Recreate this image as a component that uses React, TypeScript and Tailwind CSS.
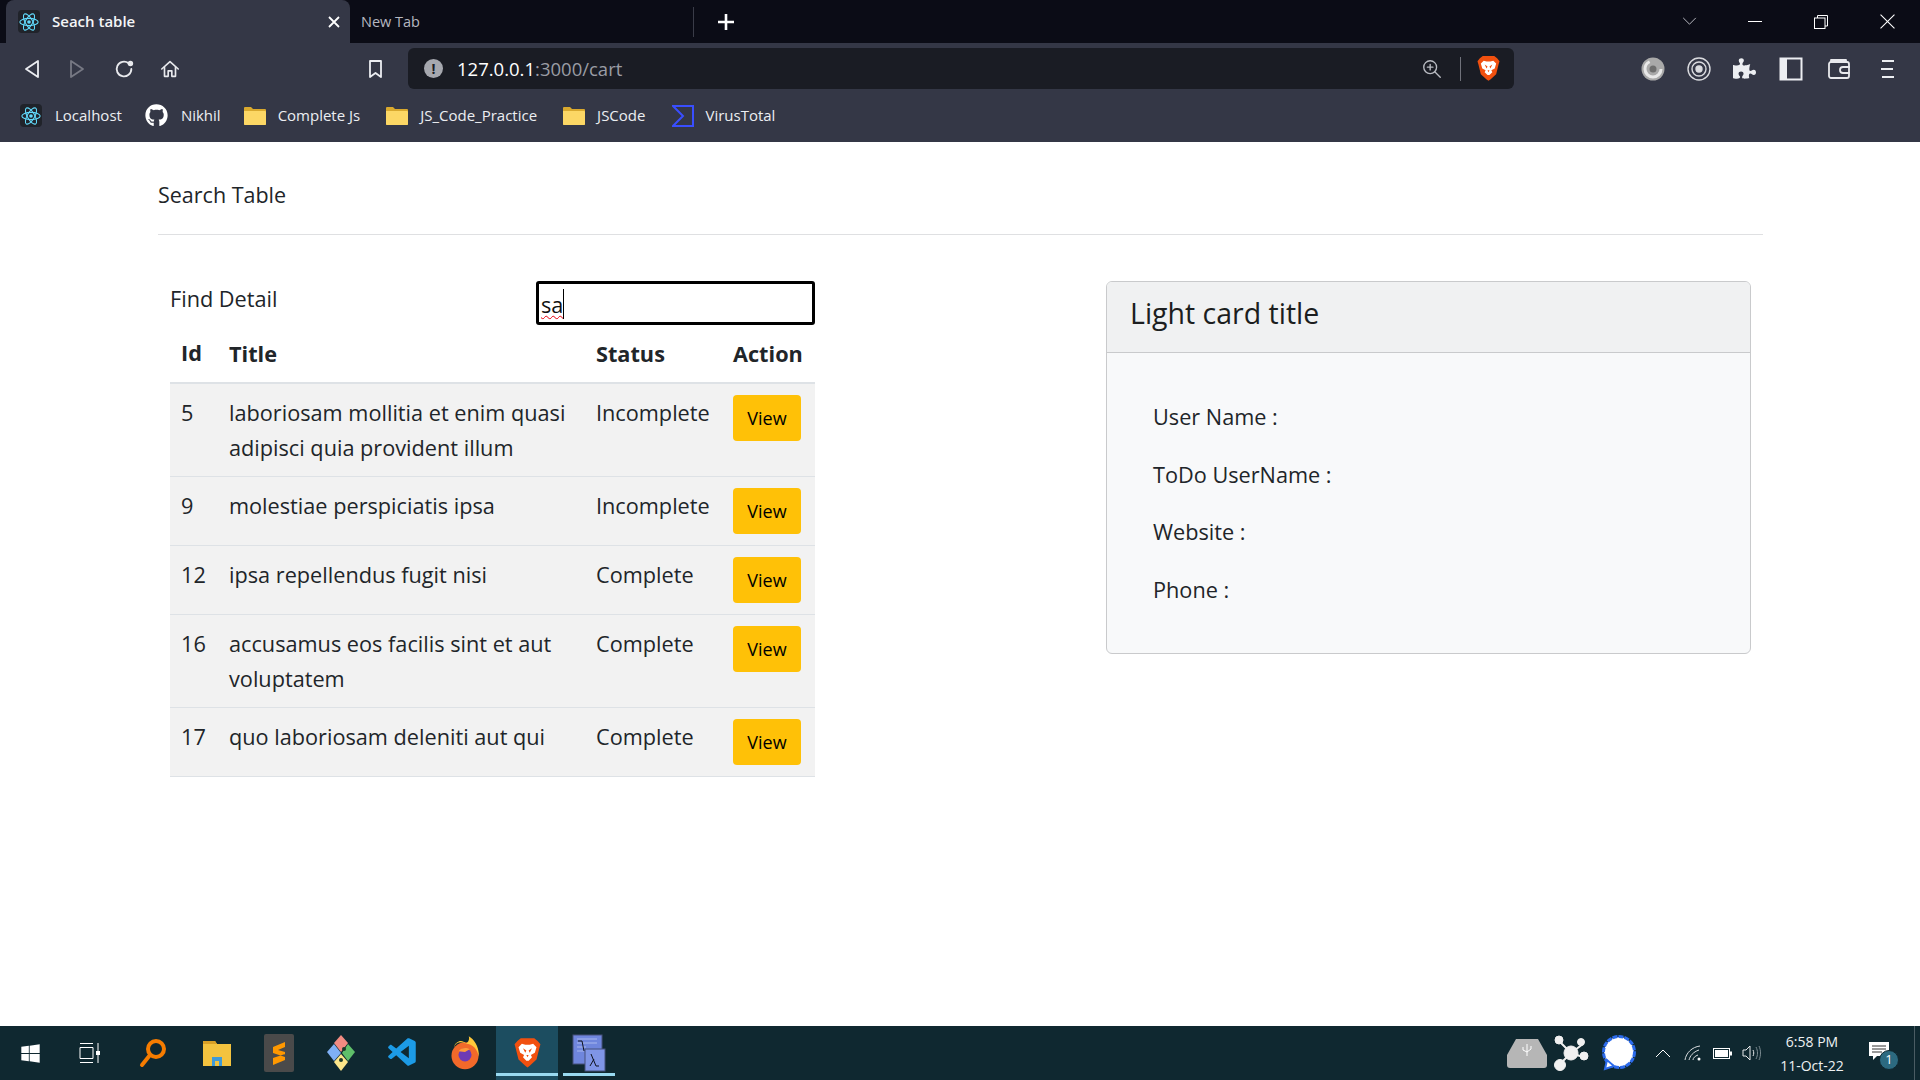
import React from 'react'
import { FaGithub, FaWindows, FaPuzzlePiece } from 'react-icons/fa'
import { VscVscode } from 'react-icons/vsc'

const rows = [
  { id: 5, title: 'laboriosam mollitia et enim quasi adipisci quia provident illum', status: 'Incomplete' },
  { id: 9, title: 'molestiae perspiciatis ipsa', status: 'Incomplete' },
  { id: 12, title: 'ipsa repellendus fugit nisi', status: 'Complete' },
  { id: 16, title: 'accusamus eos facilis sint et aut voluptatem', status: 'Complete' },
  { id: 17, title: 'quo laboriosam deleniti aut qui', status: 'Complete' },
]

const ReactLogo = ({ size = 22 }: { size?: number }) => (
  <div className="bg-[#20232a] rounded-sm flex items-center justify-center" style={{ width: size, height: size + 1 }}>
    <svg viewBox="-12 -12 24 24" width={size} height={size} fill="none" stroke="#61dafb" strokeWidth="1.2">
      <circle r="2" fill="#61dafb" stroke="none" />
      <ellipse rx="10" ry="4" />
      <ellipse rx="10" ry="4" transform="rotate(60)" />
      <ellipse rx="10" ry="4" transform="rotate(120)" />
    </svg>
  </div>
)

const Folder = () => (
  <svg viewBox="0 0 22 20" width="22" height="20">
    <path d="M0 2a1 1 0 0 1 1-1h6l2 2h12a1 1 0 0 1 1 1v14a1 1 0 0 1-1 1H1a1 1 0 0 1-1-1z" fill="#d9a92e" />
    <path d="M0 5h21a1 1 0 0 1 1 1v12a1 1 0 0 1-1 1H1a1 1 0 0 1-1-1z" fill="#fcd765" />
  </svg>
)

// lion head on an orange shield
const BraveLogo = ({ size }: { size: number }) => (
  <svg viewBox="0 0 24 28" width={size} height={size * 28 / 24}>
    <path d="M6 1h12l3 2.5 2.5 3-1 3.5-2.5 10-6 5.5-2 1.5-2-1.5-6-5.5-2.5-10-1-3.5 2.5-3z" fill="#f1500f" />
    <path d="M7 6l3 .8h4L17 6l3 3-1.5 5-3.5 2 1 2-3 3h-2l-3-3 1-2-3.5-2L4 9z" fill="#fff" />
    <path d="M8 10l3 2-1 2zM16 10l-3 2 1 2zM11 16h2l-1 2z" fill="#f1500f" />
  </svg>
)

const Bookmark = ({ icon, label, iconClass, gap }: { icon: React.ReactNode; label: string; iconClass: string; gap: string }) => (
  <div className={`flex items-center ${gap}`}>
    <div className={`flex justify-center ${iconClass}`}>{icon}</div>
    <span className="text-[15px] text-[#eceef2] whitespace-nowrap">{label}</span>
  </div>
)

const Stroke = ({ children, size = 24, color = '#e8e9ed', width = 1.8 }: { children: React.ReactNode; size?: number; color?: string; width?: number }) => (
  <svg viewBox="0 0 24 24" width={size} height={size} fill="none" stroke={color} strokeWidth={width} strokeLinecap="round" strokeLinejoin="round">
    {children}
  </svg>
)

const TabStrip = () => (
  <div className="h-[43px] bg-[#0b0c16] flex items-center pl-[6px]">
    <div className="w-[344px] h-[43px] bg-[#343746] rounded-t-[8px] flex items-center pl-[12px] pr-[10px]">
      <ReactLogo />
      <span className="ml-[12px] text-[15px] font-semibold text-[#f4f5f7] flex-1">Seach table</span>
      <svg viewBox="0 0 12 12" width="12" height="12" stroke="#ffffff" strokeWidth="1.8"><path d="M1 1l10 10M11 1L1 11" /></svg>
    </div>
    <div className="w-[344px] h-[30px] flex items-center pl-[11px] text-[14.5px] text-[#b6b8c0] border-r border-[#3a3c48]">New Tab</div>
    <div className="w-[64px] h-[43px] flex items-center justify-center">
      <svg viewBox="0 0 18 18" width="18" height="18" stroke="#ffffff" strokeWidth="2.6"><path d="M9 1v16M1 9h16" /></svg>
    </div>
    <div className="flex-1" />
    <div className="h-[43px] flex items-center text-white">
      <div className="w-[66px] flex justify-center">
        <svg viewBox="0 0 16 10" width="15" height="9" fill="none" stroke="#c8c9d0"><path d="M1 1l7 7 7-7" /></svg>
      </div>
      <div className="w-[66px] flex justify-center"><div className="w-[14px] h-px bg-white" /></div>
      <div className="w-[66px] flex justify-center">
        <svg viewBox="0 0 14 14" width="14" height="14" fill="none" stroke="#fff"><path d="M3.5 3V.5h10V11H11" /><rect x=".5" y="3" width="10.5" height="10.5" /></svg>
      </div>
      <div className="w-[66px] flex justify-center">
        <svg viewBox="0 0 14 14" width="15" height="15" fill="none" stroke="#fff"><path d="M.5.5l13 13M13.5.5l-13 13" /></svg>
      </div>
    </div>
  </div>
)

const Toolbar = () => (
  <div className="h-[51px] bg-[#343746] flex items-center">
    <div className="w-[64px] flex justify-center">
      <svg viewBox="0 0 16 20" width="16" height="20" fill="none" stroke="#eceef2" strokeWidth="1.8" strokeLinejoin="round"><path d="M14 2v16L2 10z" /></svg>
    </div>
    <div className="w-[26px] flex justify-center">
      <svg viewBox="0 0 16 20" width="16" height="20" fill="none" stroke="#777984" strokeWidth="1.8" strokeLinejoin="round"><path d="M2 2v16l12-8z" /></svg>
    </div>
    <div className="w-[68px] flex justify-center">
      <Stroke size={22} width={2}><path d="M20 12a8 8 0 1 1-3-6.2" /><circle cx="19" cy="6" r="2" fill="#e8e9ed" /></Stroke>
    </div>
    <div className="w-[24px] flex justify-center">
      <Stroke size={22}><path d="M3 12l9-8 9 8" /><path d="M6 10v10h4v-6h4v6h4V10" /></Stroke>
    </div>
    <div className="w-[226px] flex justify-end pr-[25px]">
      <svg viewBox="0 0 14 20" width="15" height="20" fill="none" stroke="#eceef2" strokeWidth="1.8" strokeLinejoin="round"><path d="M1.5 2h11v16L7 14l-5.5 4z" /></svg>
    </div>
    <div className="w-[1106px] h-[41px] bg-[#1a1c24] rounded-[6px] flex items-center pl-[16px] pr-[14px]">
      <div className="w-[19px] h-[19px] rounded-full bg-[#a6a8af] flex items-center justify-center text-[#1a1c24] text-[14px] font-bold leading-none">!</div>
      <div className="ml-[14px] text-[18.5px] flex-1"><span className="text-white">127.0.0.1</span><span className="text-[#9a9ca5]">:3000/cart</span></div>
      <Stroke size={22} color="#b9bbc2" width={1.5}><circle cx="10" cy="10" r="7" /><path d="M15 15l6 6M10 7v6M7 10h6" /></Stroke>
      <div className="w-px h-[24px] bg-[#70727b] ml-[17px] mr-[16px]" />
      <BraveLogo size={23} />
    </div>
    <div className="flex-1 flex items-center pl-[127px]">
      <div className="w-[46px]">
        <svg viewBox="0 0 24 24" width="24" height="24"><circle cx="12" cy="12" r="11.5" fill="#a9a9a9" /><circle cx="12" cy="12" r="8" fill="none" stroke="#e8e8e8" strokeWidth="3" strokeDasharray="34 16" /><circle cx="12" cy="12" r="3.5" fill="#6e6e6e" /></svg>
      </div>
      <div className="w-[46px]">
        <svg viewBox="0 0 24 24" width="24" height="24" fill="none" stroke="#d9dade" strokeWidth="1.4"><circle cx="12" cy="12" r="11" /><circle cx="12" cy="12" r="7" /><circle cx="12" cy="12" r="3" fill="#d9dade" /></svg>
      </div>
      <div className="w-[46px]"><FaPuzzlePiece size={23} color="#eceef2" /></div>
      <div className="w-[48px]">
        <svg viewBox="0 0 24 24" width="24" height="24"><rect x="1.5" y="1.5" width="21" height="21" fill="none" stroke="#eceef2" strokeWidth="2" /><rect x="1" y="1" width="7" height="22" fill="#eceef2" /></svg>
      </div>
      <div className="w-[54px]">
        <Stroke size={24} width={1.8}><rect x="2" y="5" width="20" height="16" rx="2" /><path d="M4 5V3h15v2M22 10h-6a2.5 2.5 0 0 0 0 6h6" /></Stroke>
      </div>
      <div className="flex flex-col gap-[6px]">
        <div className="w-[12px] h-[2px] bg-[#eceef2] ml-[1px]" />
        <div className="w-[12px] h-[2px] bg-[#eceef2]" />
        <div className="w-[12px] h-[2px] bg-[#eceef2] ml-[1px]" />
      </div>
    </div>
  </div>
)

const Bookmarks = () => (
  <div className="h-[48px] bg-[#343746] flex items-center pl-[20px] pb-[5px]">
    <Bookmark icon={<ReactLogo />} label="Localhost" iconClass="w-[22px]" gap="gap-[13px]" />
    <div className="w-[23px]" />
    <Bookmark icon={<FaGithub size={23} color="#fff" />} label="Nikhil" iconClass="w-[24px]" gap="gap-[12px]" />
    <div className="w-[23px]" />
    <Bookmark icon={<Folder />} label="Complete Js" iconClass="w-[22px]" gap="gap-[12px]" />
    <div className="w-[26px]" />
    <Bookmark icon={<Folder />} label="JS_Code_Practice" iconClass="w-[22px]" gap="gap-[12px]" />
    <div className="w-[26px]" />
    <Bookmark icon={<Folder />} label="JSCode" iconClass="w-[22px]" gap="gap-[12px]" />
    <div className="w-[27px]" />
    <Bookmark
      icon={<svg viewBox="0 0 22 24" width="22" height="24" fill="none" stroke="#394eff" strokeWidth="2"><path d="M1 2h20v20H1l10-10z" /></svg>}
      label="VirusTotal"
      iconClass="w-[22px]"
      gap="gap-[11px]"
    />
  </div>
)

const SearchTable = () => (
  <div className="w-[645px]">
    <div className="flex items-start h-[49px]">
      <div className="w-[366px] text-[#212529] leading-[36px]">Find Detail</div>
      <div className="w-[279px] h-[44px] border-[3px] border-black rounded-[3px] flex items-center pl-[2px] bg-white pt-[2px]">
        <span className="text-[#111] underline decoration-wavy decoration-red-600 decoration-1 underline-offset-2">sa</span>
        <div className="w-px h-[30px] bg-black" />
      </div>
    </div>
    <table className="w-[645px] table-fixed border-collapse text-[#212529]">
      <thead>
        <tr className="border-b-2 border-[#dee2e6]">
          <th className="w-[47px] text-left font-bold px-[11px] pt-[3px] pb-[9px] leading-[40px]">Id</th>
          <th className="w-[367px] text-left font-bold px-[12px] pt-[3px] pb-[9px]">Title</th>
          <th className="w-[137px] text-left font-bold px-[12px] pt-[3px] pb-[9px]">Status</th>
          <th className="text-left font-bold px-[12px] pt-[3px] pb-[9px] whitespace-nowrap">Action</th>
        </tr>
      </thead>
      <tbody>
        {rows.map(r => (
          <tr key={r.id} className="bg-[#f2f2f2] border-b border-[#dee2e6] align-top">
            <td className="px-[11px] py-[11px]">{r.id}</td>
            <td className="px-[12px] py-[11px]">{r.title}</td>
            <td className="px-[12px] py-[11px] whitespace-nowrap">{r.status}</td>
            <td className="px-[12px] py-[11px]">
              <button className="w-[68px] h-[46px] bg-[#ffc107] rounded-[4px] text-[18px] text-black">View</button>
            </td>
          </tr>
        ))}
      </tbody>
    </table>
  </div>
)

const DetailCard = () => (
  <div className="w-[645px] h-[373px] border border-[#c9cacc] rounded-[6px] bg-[#f8f9fa] overflow-hidden">
    <div className="h-[71px] bg-[#f0f1f2] border-b border-[#c9cacc] flex items-center pl-[23px] pb-[8px] text-[28.5px] font-medium text-[#1c1e20]">Light card title</div>
    <div className="pl-[46px] pt-[46px] text-[#212529] flex flex-col gap-[22.5px]">
      <p>User Name :</p>
      <p>ToDo UserName :</p>
      <p>Website :</p>
      <p>Phone :</p>
    </div>
  </div>
)

const Taskbar = () => (
  <div className="h-[54px] bg-[#0f2830] flex items-center">
    <div className="w-[60px] flex justify-center"><FaWindows size={21} color="#fff" /></div>
    <div className="w-[60px] flex justify-center">
      <svg viewBox="0 0 22 20" width="22" height="20" fill="none" stroke="#fff"><path d="M1 .5h13M1 19.5h13M1 4.5h13v11H1zM19 0v8M19 12v8" /><rect x="17.5" y="8.5" width="3" height="3" fill="#fff" /></svg>
    </div>
    <div className="w-[66px] flex justify-center">
      <svg viewBox="0 0 28 30" width="28" height="30" fill="none" stroke="#f57c00" strokeWidth="4" strokeLinecap="round"><circle cx="17" cy="11" r="8" /><path d="M11 17L3 27" /></svg>
    </div>
    <div className="w-[62px] flex justify-center">
      <svg viewBox="0 0 28 26" width="28" height="26"><path d="M0 1h12l2 3h14v22H0z" fill="#f3c33f" /><path d="M0 1h12l2 3H0z" fill="#d9a026" /><path d="M9 26v-9h10v9h-3v-5h-4v5z" fill="#3f9ad8" /></svg>
    </div>
    <div className="w-[62px] flex justify-center">
      <svg viewBox="0 0 30 38" width="30" height="38"><rect width="30" height="38" rx="2" fill="#4a4a4a" /><path d="M21 8L9 13v6l12 4v-5l-7-2 7-3zM9 24l12-4v6L9 31z" fill="#ff9800" /></svg>
    </div>
    <div className="w-[62px] flex justify-center">
      <svg viewBox="0 0 30 38" width="30" height="38"><path d="M15 1l7 8-7 9-7-9z" fill="#f28b82" /><path d="M1 18l7-8 7 9-7 8z" fill="#7fb0f5" /><path d="M29 18l-7-8-6 9 6 8z" fill="#5fbf6a" /><path d="M15 37l-7-9 7-8 7 8z" fill="#fde68a" /><circle cx="18" cy="15" r="2" fill="#1b3a2a" /><circle cx="15" cy="26" r="2" fill="#1b3a2a" /></svg>
    </div>
    <div className="w-[62px] flex justify-center"><VscVscode size={34} color="#1c9be6" /></div>
    <div className="w-[62px] flex justify-center">
      <svg viewBox="0 0 30 36" width="28" height="34">
        <circle cx="15" cy="21" r="14.5" fill="#f2692a" />
        <path d="M3 12C5 5 12 3 16 8c7 0 13 6 13.5 14C31 13 25 3 19 0c1 3 0 6-3 8C10 5 5 7 3 12z" fill="#ffc83a" />
        <circle cx="15" cy="20" r="7" fill="#6e3ab5" />
        <path d="M8 16c3-4 9-4 12-2l-5 3z" fill="#ff9a3a" />
      </svg>
    </div>
    <div className="w-[62px] h-[54px] bg-[#1c4d60] flex items-center justify-center relative">
      <BraveLogo size={27} />
      <div className="absolute left-0 right-0 bottom-[4px] h-[3px] bg-[#99d9f0]" />
    </div>
    <div className="w-[62px] h-[54px] flex items-center justify-center relative">
      <svg viewBox="0 0 34 38" width="34" height="38">
        <rect x="1" y="1" width="29" height="29" fill="#6f86dd" stroke="#46507a" />
        <path d="M5 5h20M5 9h20M5 13h9M5 17h7" stroke="#a9b8ee" />
        <rect x="13" y="15" width="20" height="22" fill="#7f95e6" stroke="#46507a" />
        <path d="M19 20l5 12M22 25l-4 7M24 32h3" stroke="#10131f" fill="none" />
        <path d="M6 7h4l2 10" stroke="#10131f" fill="none" />
      </svg>
      <div className="absolute left-[5px] right-[5px] bottom-[4px] h-[3px] bg-[#99d9f0]" />
    </div>
    <div className="flex-1" />
    <div className="w-[40px] flex justify-center">
      <svg viewBox="0 0 40 32" width="40" height="32"><path d="M9 2h22l9 16v10a3 3 0 0 1-3 3H3a3 3 0 0 1-3-3V18z" fill="#b6b6b6" /><path d="M20 7v12M16 10v3l4 2 4-3V9" stroke="#fff" fill="none" /></svg>
    </div>
    <div className="w-[5px]" />
    <div className="w-[38px] flex justify-center">
      <svg viewBox="0 0 36 36" width="36" height="36" fill="#f0f0f0" stroke="#f0f0f0"><path d="M6 6l12 12M18 18l12-9M18 18l-10 10M18 18l12 4" strokeWidth="2" /><circle cx="6" cy="5" r="4" /><circle cx="18" cy="18" r="7" /><circle cx="28" cy="7" r="3.5" /><circle cx="7" cy="30" r="5.5" /><circle cx="31" cy="21" r="4" /></svg>
    </div>
    <div className="w-[11px]" />
    <div className="w-[36px] flex justify-center">
      <svg viewBox="0 0 36 36" width="36" height="36">
        <circle cx="18" cy="17" r="15" fill="#fff" />
        <circle cx="18" cy="17" r="15.5" fill="none" stroke="#2c6bed" strokeWidth="3" strokeDasharray="5 1" />
        <path d="M6 25l-2 9 9-3z" fill="#fff" stroke="#2c6bed" strokeWidth="2" />
      </svg>
    </div>
    <div className="w-[16px]" />
    <div className="w-[20px] flex justify-center">
      <svg viewBox="0 0 16 9" width="16" height="9" fill="none" stroke="#fff"><path d="M1 8l7-7 7 7" /></svg>
    </div>
    <div className="w-[11px]" />
    <div className="w-[18px] flex justify-center">
      <svg viewBox="0 0 18 16" width="18" height="16" fill="none" stroke="#d8dcde"><path d="M1 15C2 8 8 2 16 1M5 15c1-4 4-8 10-10M9 15c0-2 2-4 5-5" /><circle cx="15" cy="14" r="1.5" fill="#fff" stroke="none" /></svg>
    </div>
    <div className="w-[11px]" />
    <div className="w-[19px] flex justify-center">
      <svg viewBox="0 0 19 11" width="19" height="11"><rect x=".5" y=".5" width="16" height="10" fill="none" stroke="#fff" /><rect x="2" y="2" width="13" height="7" fill="#fff" /><rect x="17" y="3.5" width="2" height="4" fill="#fff" /></svg>
    </div>
    <div className="w-[10px]" />
    <div className="w-[20px] flex justify-center">
      <svg viewBox="0 0 20 16" width="20" height="16" fill="none" stroke="#e8eaeb"><path d="M1 5h3l4-4v14l-4-4H1zM11 5c1 2 1 4 0 6" /><path d="M14 2c2 4 2 8 0 12M17 1c2 4 2 10 0 14" stroke="#7a8a90" /></svg>
    </div>
    <div className="w-[5px]" />
    <div className="w-[90px] flex flex-col items-center text-[14px] leading-[24px] text-[#eef1f2] pt-[1px]">
      <span>6:58 PM</span>
      <span>11-Oct-22</span>
    </div>
    <div className="w-[12px]" />
    <div className="relative w-[22px] h-[22px]">
      <svg viewBox="0 0 20 18" width="20" height="18"><path d="M0 0h20v14H8l-4 4v-4H0z" fill="#fff" /><path d="M3 4h14M3 7h14M3 10h10" stroke="#333" /></svg>
      <div className="absolute left-[10px] top-[8px] w-[20px] h-[20px] rounded-full bg-[#2c6a80] border border-[#0f2830] text-white text-[13px] flex items-center justify-center">1</div>
    </div>
    <div className="w-[23px]" />
    <div className="w-px h-[54px] bg-[#4a5c63]" />
    <div className="w-[5px]" />
  </div>
)

export default function App() {
  return (
    <div className="w-[1920px] h-[1080px] flex flex-col overflow-hidden bg-white font-['Open_Sans',sans-serif]">
      <TabStrip />
      <Toolbar />
      <Bookmarks />
      <main className="flex-1 text-[21.7px] leading-[35px]">
        <div className="ml-[158px] mr-[157px] h-[93px] border-b border-[#dfe0e2] pt-[35px] text-[21.5px] text-[#212529]">Search Table</div>
        <div className="flex ml-[170px] mr-[169px] pt-[46px] justify-between">
          <SearchTable />
          <DetailCard />
        </div>
      </main>
      <Taskbar />
    </div>
  )
}
